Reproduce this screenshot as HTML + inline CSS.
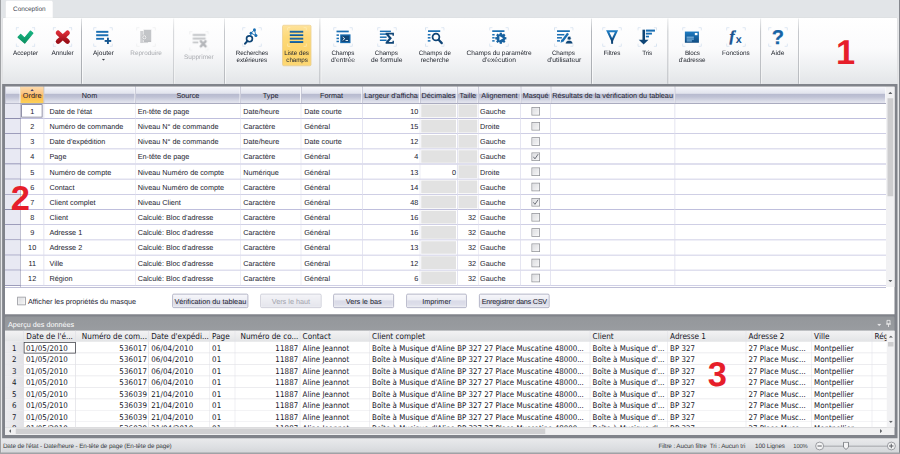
<!DOCTYPE html><html lang="fr"><head><meta charset="utf-8"><title>Conception</title><style>*{box-sizing:border-box;margin:0;padding:0}html,body{width:900px;height:454px;overflow:hidden;background:#e6e7e9}#root{position:absolute;left:0;top:0;width:3600px;height:1816px;transform:scale(0.25);transform-origin:0 0;font-family:"Liberation Sans",sans-serif;color:#1a1a2e;text-rendering:geometricPrecision}
.a{position:absolute;white-space:nowrap}
.rb{font-size:25.8px;color:#22262f;text-align:center;line-height:30px}
.rb.dis{color:#a9abb0}
.g{font-size:29.04px;color:#1c1c30;line-height:60.7px;height:60.7px}
.gh{font-size:29.04px;color:#1c1c30;text-align:center;line-height:68.8px;height:65.6px;top:347.2px;background:linear-gradient(#fbfbfd 0,#f0f1f7 10%,#e2e4ee 40%,#b7bacf 45%,#bfc2d5 62%,#dcdee9 88%,#e6e7f0 100%);border-right:3px solid #f6f6fa;border-left:2.4px solid #9fa1b9;overflow:hidden}
.pv{font-family:"DejaVu Sans Condensed","DejaVu Sans",sans-serif;font-stretch:condensed;font-size:31.4px;color:#15151f;line-height:45.88px;height:45.88px}
.st{font-size:25.4px;letter-spacing:-0.48px;color:#3a3d44;line-height:32px}
.btn{font-size:29.04px;text-align:center;height:57.2px;line-height:55.2px;top:1174.8px;border:3px solid #9c9eb6;border-radius:6px;background:linear-gradient(#f7f7fb 0,#ecedf4 45%,#d9dae7 50%,#dcdde9 75%,#e8e9f1 100%);color:#1c1c30;box-shadow:inset 0 0 0 2px rgba(255,255,255,.7)}
.btn.dis{color:#a2a3ad;border-color:#c0c1cf;background:linear-gradient(#f4f4f8,#e4e5ec)}
.cb{width:34px;height:34px;border:3px solid #8e9096;background:linear-gradient(135deg,#dcdde0,#f6f6f7);box-shadow:inset 0 0 0 2.4px rgba(255,255,255,.55)}
.big{font-weight:bold;font-size:138px;line-height:160px;color:#e61e2a}
</style></head><body><div id="root"><div class="a" style="left:0px;top:0px;width:3600px;height:1816px;background:#e6e7e9"></div>
<div class="a" style="left:0px;top:0px;width:4.2px;height:1816px;background:#a0a2a5"></div>
<div class="a" style="left:3596px;top:0px;width:4px;height:1816px;background:#85888e"></div>
<div class="a" style="left:4.2px;top:0px;width:3592px;height:70.4px;background:#e2e5e8"></div>
<div class="a" style="left:10.4px;top:69.2px;width:3580px;height:266.4px;background:linear-gradient(#ffffff 0,#fbfbfc 45%,#eceef0 80%,#e3e5e8 100%);border-left:2.8px solid #b4b7bb;border-right:2.8px solid #b4b7bb;border-top:2.8px solid #cdd0d4;border-radius:6px 6px 0 0"></div>
<div class="a rb" style="left:21.2px;top:2px;width:192px;height:68.8px;background:#fff;border:2.4px solid #d4d6d9;border-bottom:none;border-radius:6px 6px 0 0;line-height:64.8px;color:#454954;height:68.8px">Conception</div>
<div class="a" style="left:324.4px;top:74px;width:3.2px;height:261.2px;background:linear-gradient(#e4e6e8,#b4b7bc 20%,#a9acb1 100%)"></div>
<div class="a" style="left:327.6px;top:74px;width:3.2px;height:261.2px;background:rgba(255,255,255,.85)"></div>
<div class="a" style="left:694px;top:74px;width:3.2px;height:261.2px;background:linear-gradient(#e4e6e8,#b4b7bc 20%,#a9acb1 100%)"></div>
<div class="a" style="left:697.2px;top:74px;width:3.2px;height:261.2px;background:rgba(255,255,255,.85)"></div>
<div class="a" style="left:896.8px;top:74px;width:3.2px;height:261.2px;background:linear-gradient(#e4e6e8,#b4b7bc 20%,#a9acb1 100%)"></div>
<div class="a" style="left:900px;top:74px;width:3.2px;height:261.2px;background:rgba(255,255,255,.85)"></div>
<div class="a" style="left:1278.4px;top:74px;width:3.2px;height:261.2px;background:linear-gradient(#e4e6e8,#b4b7bc 20%,#a9acb1 100%)"></div>
<div class="a" style="left:1281.6px;top:74px;width:3.2px;height:261.2px;background:rgba(255,255,255,.85)"></div>
<div class="a" style="left:2364.4px;top:74px;width:3.2px;height:261.2px;background:linear-gradient(#e4e6e8,#b4b7bc 20%,#a9acb1 100%)"></div>
<div class="a" style="left:2367.6px;top:74px;width:3.2px;height:261.2px;background:rgba(255,255,255,.85)"></div>
<div class="a" style="left:2670.4px;top:74px;width:3.2px;height:261.2px;background:linear-gradient(#e4e6e8,#b4b7bc 20%,#a9acb1 100%)"></div>
<div class="a" style="left:2673.6px;top:74px;width:3.2px;height:261.2px;background:rgba(255,255,255,.85)"></div>
<div class="a" style="left:3041.4px;top:74px;width:3.2px;height:261.2px;background:linear-gradient(#e4e6e8,#b4b7bc 20%,#a9acb1 100%)"></div>
<div class="a" style="left:3044.6px;top:74px;width:3.2px;height:261.2px;background:rgba(255,255,255,.85)"></div>
<div class="a" style="left:3192.8px;top:74px;width:3.2px;height:261.2px;background:linear-gradient(#e4e6e8,#b4b7bc 20%,#a9acb1 100%)"></div>
<div class="a" style="left:3196px;top:74px;width:3.2px;height:261.2px;background:rgba(255,255,255,.85)"></div>
<svg class="a" style="left:0;top:0;width:0;height:0" viewBox="0 0 1 1"><defs><linearGradient id="gB" x1="0" y1="0" x2="0" y2="1"><stop offset="0" stop-color="#1f7dc3"/><stop offset="1" stop-color="#0f4a80"/></linearGradient><linearGradient id="gG" x1="0" y1="0" x2="0" y2="1"><stop offset="0" stop-color="#18b583"/><stop offset="1" stop-color="#0b9060"/></linearGradient><linearGradient id="gR" x1="0" y1="0" x2="0" y2="1"><stop offset="0" stop-color="#d82c36"/><stop offset="1" stop-color="#9d0f18"/></linearGradient></defs></svg>
<div class="a" style="left:1129.2px;top:100.4px;width:116px;height:163.2px;border:2.8px solid #e3b54e;border-radius:6px;background:linear-gradient(#fee29a 0,#fdd978 30%,#fcd36a 70%,#fdd874 100%)"></div>
<svg class="a" style="left:63.4px;top:109.2px;width:78px;height:78px;" viewBox="0 0 20 20"><path d="M0.4 3.2V0.4H3.2M16.8 0.4H19.6V3.2M19.6 16.8V19.6H16.8M3.2 19.6H0.4V16.8" fill="none" stroke="#cbdbec" stroke-width=".8"/><path d="M2.4 10.2L5.1 7.4L9.1 11.1L15 3.9L17.6 6L9.2 16.2Z" fill="url(#gG)" stroke="url(#gG)" stroke-width="1.2" stroke-linejoin="round"/></svg>
<div class="a rb " style="left:-78px;top:195.2px;width:360px;font-size:25.52px;letter-spacing:0px;text-indent:0px">Accepter</div>
<svg class="a" style="left:211.2px;top:109.2px;width:78px;height:78px;" viewBox="0 0 20 20"><path d="M0.4 3.2V0.4H3.2M16.8 0.4H19.6V3.2M19.6 16.8V19.6H16.8M3.2 19.6H0.4V16.8" fill="none" stroke="#cbdbec" stroke-width=".8"/><path d="M5.5 5.8L15.1 14.6M15.1 5.8L5.5 14.6" fill="none" stroke="url(#gR)" stroke-width="4.9" stroke-linecap="round"/></svg>
<div class="a rb " style="left:70.4px;top:195.2px;width:360px;font-size:25.96px;letter-spacing:0px;text-indent:0px">Annuler</div>
<svg class="a" style="left:373.2px;top:109.2px;width:78px;height:78px;" viewBox="0 0 20 20"><path d="M0.4 3.2V0.4H3.2M16.8 0.4H19.6V3.2M19.6 16.8V19.6H16.8M3.2 19.6H0.4V16.8" fill="none" stroke="#cbdbec" stroke-width=".8"/><g fill="#1a6fb3"><rect x="3" y="3.7" width="12.5" height="2"/><rect x="3" y="7.2" width="12.5" height="2"/><rect x="3" y="10.9" width="8.1" height="1.9"/></g><g fill="#14558f"><rect x="11.7" y="13.1" width="6.7" height="1.9"/><rect x="14.1" y="10.7" width="1.9" height="6.5"/></g></svg>
<div class="a rb " style="left:233.6px;top:195.2px;width:360px;font-size:26.32px;letter-spacing:0px;text-indent:0px">Ajouter</div>
<svg class="a" style="left:545.4px;top:109.2px;width:78px;height:78px;" viewBox="0 0 20 20"><path d="M0.4 3.2V0.4H3.2M16.8 0.4H19.6V3.2M19.6 16.8V19.6H16.8M3.2 19.6H0.4V16.8" fill="none" stroke="#e9eaec" stroke-width=".8"/><rect x="4.1" y="3.8" width="8" height="12.4" fill="#cfd0d3"/><rect x="7.6" y="2.5" width="7.8" height="12.6" fill="#c3c5c8" stroke="#f3f3f4" stroke-width=".6"/><rect x="7.9" y="13.8" width="7.2" height="1.1" fill="#b4b6ba"/><circle cx="8.3" cy="10.3" r="2.5" fill="#f6f6f7" stroke="#b9bbbf" stroke-width=".9"/><path d="M6.8 10.3h3M8.3 8.8v3" stroke="#b4b6ba" stroke-width=".8"/></svg>
<div class="a rb dis" style="left:404.4px;top:195.2px;width:360px;font-size:25.56px;letter-spacing:0px;text-indent:0px">Reproduire</div>
<svg class="a" style="left:757.2px;top:124.8px;width:78px;height:78px;" viewBox="0 0 20 20"><path d="M0.4 3.2V0.4H3.2M16.8 0.4H19.6V3.2M19.6 16.8V19.6H16.8M3.2 19.6H0.4V16.8" fill="none" stroke="#e9eaec" stroke-width=".8"/><g fill="#c1c3c6"><rect x="3.6" y="2.8" width="13.2" height="2"/><rect x="3.6" y="6.6" width="13.2" height="2"/><rect x="3.6" y="10.7" width="5.7" height="1.7"/></g><path d="M11.9 10.4L16.8 15.5M16.8 10.4L11.9 15.5" stroke="#b4b6ba" stroke-width="2.5" stroke-linecap="round"/></svg>
<div class="a rb dis" style="left:615.6px;top:210.8px;width:360px;font-size:25.8px;letter-spacing:0px;text-indent:0px">Supprimer</div>
<svg class="a" style="left:969px;top:109.2px;width:78px;height:78px;" viewBox="0 0 20 20"><path d="M0.4 3.2V0.4H3.2M16.8 0.4H19.6V3.2M19.6 16.8V19.6H16.8M3.2 19.6H0.4V16.8" fill="none" stroke="#cbdbec" stroke-width=".8"/><path d="M9 6.05L12.5 2.6L14 8.5Z" fill="none" stroke="#1a6fb3" stroke-width=".9"/><circle cx="7.4" cy="11.9" r="3" fill="none" stroke="#0f4576" stroke-width="1.7"/><path d="M5.2 14.2L2.9 16.8" stroke="#0f4576" stroke-width="2.2" stroke-linecap="round"/><path d="M9 6.05L8.3 9" stroke="#1a6fb3" stroke-width="1"/><circle cx="12.5" cy="2.7" r="1.55" fill="#1a6fb3"/><circle cx="14" cy="8.5" r="1.55" fill="#1a6fb3"/><circle cx="9" cy="6.05" r="1.45" fill="#1a6fb3"/></svg>
<div class="a rb " style="left:828px;top:195.2px;width:360px;font-size:25.2px;letter-spacing:-0.54px;text-indent:-0.54px">Recherches</div>
<div class="a rb " style="left:827.2px;top:225.2px;width:360px;font-size:25.2px;letter-spacing:-0.2px;text-indent:-0.2px">extérieures</div>
<svg class="a" style="left:1149.4px;top:109.2px;width:78px;height:78px;" viewBox="0 0 20 20"><path d="M0.4 3.2V0.4H3.2M16.8 0.4H19.6V3.2M19.6 16.8V19.6H16.8M3.2 19.6H0.4V16.8" fill="none" stroke="#fff0c0" stroke-width=".8"/><g fill="url(#gB)"><rect x="2.6" y="3.6" width="13.8" height="1.9"/><rect x="2.6" y="7.1" width="13.8" height="1.9"/><rect x="2.6" y="10.7" width="13.8" height="1.9"/><rect x="2.6" y="14.1" width="13.8" height="2"/></g></svg>
<div class="a rb " style="left:1006.4px;top:195.2px;width:360px;font-size:25.2px;letter-spacing:-0.18px;text-indent:-0.18px">Liste des</div>
<div class="a rb " style="left:1008.4px;top:225.2px;width:360px;font-size:25.2px;letter-spacing:-0.42px;text-indent:-0.42px">champs</div>
<svg class="a" style="left:1333px;top:109.2px;width:78px;height:78px;" viewBox="0 0 20 20"><path d="M0.4 3.2V0.4H3.2M16.8 0.4H19.6V3.2M19.6 16.8V19.6H16.8M3.2 19.6H0.4V16.8" fill="none" stroke="#cbdbec" stroke-width=".8"/><rect x="3.35" y="3.45" width="12.55" height="1.75" fill="#1a6fb3"/><rect x="3.35" y="7.3" width="2.5" height="1.55" fill="#1a6fb3"/><rect x="3.35" y="10.7" width="2.5" height="1.55" fill="#1a6fb3"/><rect x="3.35" y="13.8" width="2.5" height="1.55" fill="#1a6fb3"/><rect x="7.1" y="7.3" width="10.6" height="9" fill="#1a6fb3"/><rect x="8.3" y="8.6" width="8.2" height="6.4" fill="#0f4576"/><path d="M9.7 10l2.1 1.7-2.1 1.7M12.6 13.6h2.6" fill="none" stroke="#fff" stroke-width=".9"/></svg>
<div class="a rb " style="left:1191.6px;top:195.2px;width:360px;font-size:25.2px;letter-spacing:-0.34px;text-indent:-0.34px">Champs</div>
<div class="a rb " style="left:1192px;top:225.2px;width:360px;font-size:26.68px;letter-spacing:0px;text-indent:0px">d&#x27;entrée</div>
<svg class="a" style="left:1509px;top:109.2px;width:78px;height:78px;" viewBox="0 0 20 20"><path d="M0.4 3.2V0.4H3.2M16.8 0.4H19.6V3.2M19.6 16.8V19.6H16.8M3.2 19.6H0.4V16.8" fill="none" stroke="#cbdbec" stroke-width=".8"/><rect x="2.7" y="3.45" width="11.3" height="1.5" fill="#1a6fb3"/><rect x="2.7" y="6.3" width="6.9" height="1.5" fill="#1a6fb3"/><rect x="2.7" y="9.45" width="6.9" height="1.5" fill="#1a6fb3"/><rect x="2.7" y="12.6" width="6.9" height="1.5" fill="#1a6fb3"/><path d="M8.6 5.7h8.5v3h-1.5v-1.3h-3.9l3.3 3.9-3.3 3.9h3.9v-1.3h1.5v3.1h-8.5v-1.7l3.4-4-3.4-4z" fill="#0f4576"/></svg>
<div class="a rb " style="left:1365.2px;top:195.2px;width:360px;font-size:25.2px;letter-spacing:-0.34px;text-indent:-0.34px">Champs</div>
<div class="a rb " style="left:1367.2px;top:225.2px;width:360px;font-size:26.56px;letter-spacing:0px;text-indent:0px">de formule</div>
<svg class="a" style="left:1700.4px;top:109.2px;width:78px;height:78px;" viewBox="0 0 20 20"><path d="M0.4 3.2V0.4H3.2M16.8 0.4H19.6V3.2M19.6 16.8V19.6H16.8M3.2 19.6H0.4V16.8" fill="none" stroke="#cbdbec" stroke-width=".8"/><rect x="3.1" y="3.1" width="12.5" height="1.75" fill="#1a6fb3"/><rect x="2.85" y="6.9" width="2.75" height="1.55" fill="#1a6fb3"/><rect x="2.85" y="10.05" width="2.75" height="1.55" fill="#1a6fb3"/><rect x="2.85" y="13.2" width="2.75" height="1.55" fill="#1a6fb3"/><circle cx="11.25" cy="10.05" r="3.5" fill="#fff" stroke="#0f4576" stroke-width="1.8"/><path d="M14 12.9L17.2 16.3" stroke="#0f4576" stroke-width="2.3" stroke-linecap="round"/></svg>
<div class="a rb " style="left:1559.2px;top:195.2px;width:360px;font-size:25.2px;letter-spacing:0px;text-indent:0px">Champs de</div>
<div class="a rb " style="left:1559.6px;top:225.2px;width:360px;font-size:25.64px;letter-spacing:0px;text-indent:0px">recherche</div>
<svg class="a" style="left:1957px;top:109.2px;width:78px;height:78px;" viewBox="0 0 20 20"><path d="M0.4 3.2V0.4H3.2M16.8 0.4H19.6V3.2M19.6 16.8V19.6H16.8M3.2 19.6H0.4V16.8" fill="none" stroke="#cbdbec" stroke-width=".8"/><rect x="3.05" y="3.1" width="12.55" height="1.75" fill="#1a6fb3"/><rect x="3.05" y="6.9" width="2.45" height="1.55" fill="#1a6fb3"/><rect x="3.05" y="10.05" width="2.45" height="1.55" fill="#1a6fb3"/><rect x="3.05" y="13.2" width="2.45" height="1.55" fill="#1a6fb3"/><g transform="translate(11.85 11.3)" fill="#17619f"><circle r="4.5"/><rect x="-1.15" y="-5.7" width="2.3" height="2.4" transform="rotate(0)"/><rect x="-1.15" y="-5.7" width="2.3" height="2.4" transform="rotate(45)"/><rect x="-1.15" y="-5.7" width="2.3" height="2.4" transform="rotate(90)"/><rect x="-1.15" y="-5.7" width="2.3" height="2.4" transform="rotate(135)"/><rect x="-1.15" y="-5.7" width="2.3" height="2.4" transform="rotate(180)"/><rect x="-1.15" y="-5.7" width="2.3" height="2.4" transform="rotate(225)"/><rect x="-1.15" y="-5.7" width="2.3" height="2.4" transform="rotate(270)"/><rect x="-1.15" y="-5.7" width="2.3" height="2.4" transform="rotate(315)"/><path d="M-1.4 -2.3L2.5 0L-1.4 2.3Z" fill="#fff"/></g></svg>
<div class="a rb " style="left:1816.4px;top:195.2px;width:360px;font-size:26.2px;letter-spacing:0px;text-indent:0px">Champs du paramètre</div>
<div class="a rb " style="left:1816.4px;top:225.2px;width:360px;font-size:26.64px;letter-spacing:0px;text-indent:0px">d&#x27;exécution</div>
<svg class="a" style="left:2216px;top:109.2px;width:78px;height:78px;" viewBox="0 0 20 20"><path d="M0.4 3.2V0.4H3.2M16.8 0.4H19.6V3.2M19.6 16.8V19.6H16.8M3.2 19.6H0.4V16.8" fill="none" stroke="#cbdbec" stroke-width=".8"/><rect x="3.1" y="3.1" width="13.15" height="1.75" fill="#1a6fb3"/><rect x="3.1" y="6.9" width="7.5" height="1.55" fill="#1a6fb3"/><rect x="3.1" y="10.05" width="5" height="1.55" fill="#1a6fb3"/><rect x="3.1" y="13.2" width="3.1" height="1.55" fill="#1a6fb3"/><path d="M14.4 6.3L8.2 14.6" stroke="#1a6fb3" stroke-width="2.5"/><path d="M8.9 13.6L7.2 16.2L6.9 16L7.4 12.6z" fill="#1a6fb3"/><g fill="#0f4576"><circle cx="15.6" cy="11.2" r="1.9" stroke="#fff" stroke-width=".5"/><path d="M11.9 17c0-2.4 1.6-3.5 3.7-3.5s3.6 1.1 3.6 3.5z" stroke="#fff" stroke-width=".4"/></g></svg>
<div class="a rb " style="left:2073.6px;top:195.2px;width:360px;font-size:25.2px;letter-spacing:-0.34px;text-indent:-0.34px">Champs</div>
<div class="a rb " style="left:2076.8px;top:225.2px;width:360px;font-size:26.96px;letter-spacing:0px;text-indent:0px">d&#x27;utilisateur</div>
<svg class="a" style="left:2409px;top:109.2px;width:78px;height:78px;" viewBox="0 0 20 20"><path d="M0.4 3.2V0.4H3.2M16.8 0.4H19.6V3.2M19.6 16.8V19.6H16.8M3.2 19.6H0.4V16.8" fill="none" stroke="#cbdbec" stroke-width=".8"/><path d="M5.6 4.1H14.6L10.1 13.6Z" fill="none" stroke="url(#gB)" stroke-width="2.1" stroke-linejoin="miter"/><rect x="9.1" y="12.6" width="2" height="4.4" fill="#0f4576"/></svg>
<div class="a rb " style="left:2268px;top:195.2px;width:360px;font-size:25.2px;letter-spacing:-0.17px;text-indent:-0.17px">Filtres</div>
<svg class="a" style="left:2549.8px;top:109.2px;width:78px;height:78px;" viewBox="0 0 20 20"><path d="M0.4 3.2V0.4H3.2M16.8 0.4H19.6V3.2M19.6 16.8V19.6H16.8M3.2 19.6H0.4V16.8" fill="none" stroke="#cbdbec" stroke-width=".8"/><g fill="#0f4576"><rect x="5.1" y="2.5" width="2.6" height="11.4"/><path d="M1.3 12.9h10l-5 4.9z"/></g><g fill="#1a6fb3"><rect x="8.6" y="2.4" width="9.3" height="2.1"/><rect x="8.6" y="5.6" width="6.2" height="1.9"/><rect x="8.6" y="8.7" width="3.2" height="1.7"/></g></svg>
<div class="a rb " style="left:2408.8px;top:195.2px;width:360px;font-size:25.2px;letter-spacing:-0.32px;text-indent:-0.32px">Tris</div>
<svg class="a" style="left:2729px;top:109.2px;width:78px;height:78px;" viewBox="0 0 20 20"><path d="M0.4 3.2V0.4H3.2M16.8 0.4H19.6V3.2M19.6 16.8V19.6H16.8M3.2 19.6H0.4V16.8" fill="none" stroke="#cbdbec" stroke-width=".8"/><rect x="2.7" y="4.4" width="14.4" height="11.5" fill="url(#gB)"/><rect x="12.9" y="5.85" width="2.7" height="2.3" fill="#fff"/><g fill="#7fb6e0"><rect x="4.5" y="9.6" width="7.4" height="1.2"/><rect x="4.5" y="11.5" width="7.4" height="1.2"/><rect x="4.5" y="13.4" width="5.4" height="1.2"/></g></svg>
<div class="a rb " style="left:2589.6px;top:195.2px;width:360px;font-size:25.2px;letter-spacing:-0.55px;text-indent:-0.55px">Blocs</div>
<div class="a rb " style="left:2588.4px;top:225.2px;width:360px;font-size:25.2px;letter-spacing:-0.09px;text-indent:-0.09px">d&#x27;adresse</div>
<svg class="a" style="left:2905.4px;top:109.2px;width:78px;height:78px;" viewBox="0 0 20 20"><path d="M0.4 3.2V0.4H3.2M16.8 0.4H19.6V3.2M19.6 16.8V19.6H16.8M3.2 19.6H0.4V16.8" fill="none" stroke="#cbdbec" stroke-width=".8"/><text x="3.4" y="14" font-family="Liberation Serif,serif" font-style="italic" font-weight="bold" font-size="15.5" fill="#17528f" stroke="#17528f" stroke-width=".45">f</text><text x="9.7" y="16.2" font-family="Liberation Sans,sans-serif" font-weight="bold" font-size="11" fill="#17528f">x</text></svg>
<div class="a rb " style="left:2763.6px;top:195.2px;width:360px;font-size:25.44px;letter-spacing:0px;text-indent:0px">Fonctions</div>
<svg class="a" style="left:3073px;top:109.2px;width:78px;height:78px;" viewBox="0 0 20 20"><path d="M0.4 3.2V0.4H3.2M16.8 0.4H19.6V3.2M19.6 16.8V19.6H16.8M3.2 19.6H0.4V16.8" fill="none" stroke="#cbdbec" stroke-width=".8"/><text x="9.8" y="17.1" text-anchor="middle" font-family="Liberation Sans,sans-serif" font-weight="bold" font-size="20.5" fill="#1764a6" stroke="#1764a6" stroke-width=".3">?</text></svg>
<div class="a rb " style="left:2930.8px;top:195.2px;width:360px;font-size:26.36px;letter-spacing:0px;text-indent:0px">Aide</div>
<svg class="a" style="left:407.2px;top:235.4px;width:13.6px;height:7.6px;" viewBox="0 0 3.4 1.9"><path d="M0 0 L3.4 0 L1.7 1.9Z" fill="#3c3f46"/></svg>
<div class="a big" style="left:3326.4px;top:128.4px;width:112px;text-align:center">1</div>
<div class="a" style="left:8.4px;top:335.6px;width:3582px;height:1418.4px;background:linear-gradient(90deg,#9a9ca0 0,#80838a 4px,#80838a 100%)"></div>
<div class="a" style="left:19.6px;top:347.2px;width:3558.4px;height:909.6px;background:#fff"></div>
<div class="a gh" style="left:19.6px;width:62.4px;"></div>
<div class="a gh" style="left:82px;width:93.2px;background:linear-gradient(#fedcae 0,#fcc27a 45%,#fbb050 52%,#fdd458 100%);border-left:2px solid #e8b860;border-right:2px solid #e8c070;">Ordre</div>
<div class="a gh" style="left:175.2px;width:366.8px;">Nom</div>
<div class="a gh" style="left:542px;width:420px;">Source</div>
<div class="a gh" style="left:962px;width:242px;">Type</div>
<div class="a gh" style="left:1204px;width:245.2px;">Format</div>
<div class="a gh" style="left:1449.2px;width:230.8px;">Largeur d&#x27;afficha</div>
<div class="a gh" style="left:1680px;width:149.2px;">Décimales</div>
<div class="a gh" style="left:1829.2px;width:84.8px;">Taille</div>
<div class="a gh" style="left:1914px;width:168.8px;">Alignement</div>
<div class="a gh" style="left:2082.8px;width:120px;">Masqué</div>
<div class="a gh" style="left:2202.8px;width:496.4px;">Résultats de la vérification du tableau</div>
<div class="a gh" style="left:2699.2px;width:844.8px;"></div>
<svg class="a" style="left:121.2px;top:356.4px;width:15.2px;height:8.8px;" viewBox="0 0 3.8 2.2"><path d="M0 2.2 L1.9 0 L3.8 2.2Z" fill="#3f3f6e"/></svg>
<div class="a" style="left:19.6px;top:411.6px;width:3524px;height:3.2px;background:#8f90ab"></div>
<div class="a" style="left:19.6px;top:414.8px;width:61.6px;height:60.72px;background:#e8e9f3"></div>
<div class="a g" style="left:82px;top:415.8px;width:93.2px;text-align:center">1</div>
<div class="a g" style="left:175.2px;top:415.8px;width:366.8px;padding-left:22.8px">Date de l&#x27;état</div>
<div class="a g" style="left:542px;top:415.8px;width:420px;padding-left:8.8px">En-tête de page</div>
<div class="a g" style="left:962px;top:415.8px;width:242px;padding-left:11.2px">Date/heure</div>
<div class="a g" style="left:1204px;top:415.8px;width:245.2px;padding-left:12.8px">Date courte</div>
<div class="a g" style="left:1449.2px;top:415.8px;width:230.8px;text-align:right;padding-right:6.8px">10</div>
<div class="a" style="left:1685.2px;top:418.4px;width:139.2px;height:50.72px;background:#e2e2e2"></div>
<div class="a" style="left:1834.4px;top:418.4px;width:74.8px;height:50.72px;background:#e2e2e2"></div>
<div class="a g" style="left:1914px;top:415.8px;width:168.8px;padding-left:6.4px">Gauche</div>
<div class="a cb" style="left:2126.4px;top:427.6px"></div>
<div class="a" style="left:19.6px;top:472.32px;width:3524px;height:3.2px;background:#bfbfdd"></div>
<div class="a" style="left:19.6px;top:472.32px;width:62.4px;height:3.2px;background:#8e8eae"></div>
<div class="a" style="left:19.6px;top:475.52px;width:61.6px;height:60.72px;background:#e8e9f3"></div>
<div class="a g" style="left:82px;top:476.48px;width:93.2px;text-align:center">2</div>
<div class="a g" style="left:175.2px;top:476.48px;width:366.8px;padding-left:22.8px">Numéro de commande</div>
<div class="a g" style="left:542px;top:476.48px;width:420px;padding-left:8.8px">Niveau N° de commande</div>
<div class="a g" style="left:962px;top:476.48px;width:242px;padding-left:11.2px">Caractère</div>
<div class="a g" style="left:1204px;top:476.48px;width:245.2px;padding-left:12.8px">Général</div>
<div class="a g" style="left:1449.2px;top:476.48px;width:230.8px;text-align:right;padding-right:6.8px">15</div>
<div class="a" style="left:1685.2px;top:479.12px;width:139.2px;height:50.72px;background:#e2e2e2"></div>
<div class="a" style="left:1834.4px;top:479.12px;width:74.8px;height:50.72px;background:#e2e2e2"></div>
<div class="a g" style="left:1914px;top:476.48px;width:168.8px;padding-left:6.4px">Droite</div>
<div class="a cb" style="left:2126.4px;top:488.32px"></div>
<div class="a" style="left:19.6px;top:533px;width:3524px;height:3.2px;background:#bfbfdd"></div>
<div class="a" style="left:19.6px;top:533px;width:62.4px;height:3.2px;background:#8e8eae"></div>
<div class="a" style="left:19.6px;top:536.2px;width:61.6px;height:60.72px;background:#e8e9f3"></div>
<div class="a g" style="left:82px;top:537.2px;width:93.2px;text-align:center">3</div>
<div class="a g" style="left:175.2px;top:537.2px;width:366.8px;padding-left:22.8px">Date d&#x27;expédition</div>
<div class="a g" style="left:542px;top:537.2px;width:420px;padding-left:8.8px">Niveau N° de commande</div>
<div class="a g" style="left:962px;top:537.2px;width:242px;padding-left:11.2px">Date/heure</div>
<div class="a g" style="left:1204px;top:537.2px;width:245.2px;padding-left:12.8px">Date courte</div>
<div class="a g" style="left:1449.2px;top:537.2px;width:230.8px;text-align:right;padding-right:6.8px">12</div>
<div class="a" style="left:1685.2px;top:539.8px;width:139.2px;height:50.72px;background:#e2e2e2"></div>
<div class="a" style="left:1834.4px;top:539.8px;width:74.8px;height:50.72px;background:#e2e2e2"></div>
<div class="a g" style="left:1914px;top:537.2px;width:168.8px;padding-left:6.4px">Gauche</div>
<div class="a cb" style="left:2126.4px;top:549px"></div>
<div class="a" style="left:19.6px;top:593.72px;width:3524px;height:3.2px;background:#bfbfdd"></div>
<div class="a" style="left:19.6px;top:593.72px;width:62.4px;height:3.2px;background:#8e8eae"></div>
<div class="a" style="left:19.6px;top:596.92px;width:61.6px;height:60.72px;background:#e8e9f3"></div>
<div class="a g" style="left:82px;top:597.92px;width:93.2px;text-align:center">4</div>
<div class="a g" style="left:175.2px;top:597.92px;width:366.8px;padding-left:22.8px">Page</div>
<div class="a g" style="left:542px;top:597.92px;width:420px;padding-left:8.8px">En-tête de page</div>
<div class="a g" style="left:962px;top:597.92px;width:242px;padding-left:11.2px">Caractère</div>
<div class="a g" style="left:1204px;top:597.92px;width:245.2px;padding-left:12.8px">Général</div>
<div class="a g" style="left:1449.2px;top:597.92px;width:230.8px;text-align:right;padding-right:6.8px">4</div>
<div class="a" style="left:1685.2px;top:600.52px;width:139.2px;height:50.72px;background:#e2e2e2"></div>
<div class="a" style="left:1834.4px;top:600.52px;width:74.8px;height:50.72px;background:#e2e2e2"></div>
<div class="a g" style="left:1914px;top:597.92px;width:168.8px;padding-left:6.4px">Gauche</div>
<div class="a cb" style="left:2126.4px;top:609.72px"><svg class="a" style="left:0;top:0;width:28px;height:28px" viewBox="0 0 7 7"><path d="M1.1 3.5L2.7 5.6L5.9 .9" fill="none" stroke="#5b5e68" stroke-width=".85"/></svg></div>
<div class="a" style="left:19.6px;top:654.4px;width:3524px;height:3.2px;background:#bfbfdd"></div>
<div class="a" style="left:19.6px;top:654.4px;width:62.4px;height:3.2px;background:#8e8eae"></div>
<div class="a" style="left:19.6px;top:657.6px;width:61.6px;height:60.72px;background:#e8e9f3"></div>
<div class="a g" style="left:82px;top:658.6px;width:93.2px;text-align:center">5</div>
<div class="a g" style="left:175.2px;top:658.6px;width:366.8px;padding-left:22.8px">Numéro de compte</div>
<div class="a g" style="left:542px;top:658.6px;width:420px;padding-left:8.8px">Niveau Numéro de compte</div>
<div class="a g" style="left:962px;top:658.6px;width:242px;padding-left:11.2px">Numérique</div>
<div class="a g" style="left:1204px;top:658.6px;width:245.2px;padding-left:12.8px">Général</div>
<div class="a g" style="left:1449.2px;top:658.6px;width:230.8px;text-align:right;padding-right:6.8px">13</div>
<div class="a g" style="left:1680px;top:658.6px;width:149.2px;text-align:right;padding-right:4.8px">0</div>
<div class="a" style="left:1834.4px;top:661.2px;width:74.8px;height:50.72px;background:#e2e2e2"></div>
<div class="a g" style="left:1914px;top:658.6px;width:168.8px;padding-left:6.4px">Droite</div>
<div class="a cb" style="left:2126.4px;top:670.4px"></div>
<div class="a" style="left:19.6px;top:715.12px;width:3524px;height:3.2px;background:#bfbfdd"></div>
<div class="a" style="left:19.6px;top:715.12px;width:62.4px;height:3.2px;background:#8e8eae"></div>
<div class="a" style="left:19.6px;top:718.28px;width:61.6px;height:60.72px;background:#e8e9f3"></div>
<div class="a g" style="left:82px;top:719.28px;width:93.2px;text-align:center">6</div>
<div class="a g" style="left:175.2px;top:719.28px;width:366.8px;padding-left:22.8px">Contact</div>
<div class="a g" style="left:542px;top:719.28px;width:420px;padding-left:8.8px">Niveau Numéro de compte</div>
<div class="a g" style="left:962px;top:719.28px;width:242px;padding-left:11.2px">Caractère</div>
<div class="a g" style="left:1204px;top:719.28px;width:245.2px;padding-left:12.8px">Général</div>
<div class="a g" style="left:1449.2px;top:719.28px;width:230.8px;text-align:right;padding-right:6.8px">14</div>
<div class="a" style="left:1685.2px;top:721.88px;width:139.2px;height:50.72px;background:#e2e2e2"></div>
<div class="a" style="left:1834.4px;top:721.88px;width:74.8px;height:50.72px;background:#e2e2e2"></div>
<div class="a g" style="left:1914px;top:719.28px;width:168.8px;padding-left:6.4px">Gauche</div>
<div class="a cb" style="left:2126.4px;top:731.08px"></div>
<div class="a" style="left:19.6px;top:775.8px;width:3524px;height:3.2px;background:#bfbfdd"></div>
<div class="a" style="left:19.6px;top:775.8px;width:62.4px;height:3.2px;background:#8e8eae"></div>
<div class="a" style="left:19.6px;top:779px;width:61.6px;height:60.72px;background:#e8e9f3"></div>
<div class="a g" style="left:82px;top:780px;width:93.2px;text-align:center">7</div>
<div class="a g" style="left:175.2px;top:780px;width:366.8px;padding-left:22.8px">Client complet</div>
<div class="a g" style="left:542px;top:780px;width:420px;padding-left:8.8px">Niveau Client</div>
<div class="a g" style="left:962px;top:780px;width:242px;padding-left:11.2px">Caractère</div>
<div class="a g" style="left:1204px;top:780px;width:245.2px;padding-left:12.8px">Général</div>
<div class="a g" style="left:1449.2px;top:780px;width:230.8px;text-align:right;padding-right:6.8px">48</div>
<div class="a" style="left:1685.2px;top:782.6px;width:139.2px;height:50.72px;background:#e2e2e2"></div>
<div class="a" style="left:1834.4px;top:782.6px;width:74.8px;height:50.72px;background:#e2e2e2"></div>
<div class="a g" style="left:1914px;top:780px;width:168.8px;padding-left:6.4px">Gauche</div>
<div class="a cb" style="left:2126.4px;top:791.8px"><svg class="a" style="left:0;top:0;width:28px;height:28px" viewBox="0 0 7 7"><path d="M1.1 3.5L2.7 5.6L5.9 .9" fill="none" stroke="#5b5e68" stroke-width=".85"/></svg></div>
<div class="a" style="left:19.6px;top:836.48px;width:3524px;height:3.2px;background:#bfbfdd"></div>
<div class="a" style="left:19.6px;top:836.48px;width:62.4px;height:3.2px;background:#8e8eae"></div>
<div class="a" style="left:19.6px;top:839.72px;width:61.6px;height:60.72px;background:#e8e9f3"></div>
<div class="a g" style="left:82px;top:840.72px;width:93.2px;text-align:center">8</div>
<div class="a g" style="left:175.2px;top:840.72px;width:366.8px;padding-left:22.8px">Client</div>
<div class="a g" style="left:542px;top:840.72px;width:420px;padding-left:8.8px">Calculé: Bloc d&#x27;adresse</div>
<div class="a g" style="left:962px;top:840.72px;width:242px;padding-left:11.2px">Caractère</div>
<div class="a g" style="left:1204px;top:840.72px;width:245.2px;padding-left:12.8px">Général</div>
<div class="a g" style="left:1449.2px;top:840.72px;width:230.8px;text-align:right;padding-right:6.8px">16</div>
<div class="a" style="left:1685.2px;top:843.32px;width:139.2px;height:50.72px;background:#e2e2e2"></div>
<div class="a g" style="left:1829.2px;top:840.72px;width:84.8px;text-align:right;padding-right:10px">32</div>
<div class="a g" style="left:1914px;top:840.72px;width:168.8px;padding-left:6.4px">Gauche</div>
<div class="a cb" style="left:2126.4px;top:852.48px"></div>
<div class="a" style="left:19.6px;top:897.2px;width:3524px;height:3.2px;background:#bfbfdd"></div>
<div class="a" style="left:19.6px;top:897.2px;width:62.4px;height:3.2px;background:#8e8eae"></div>
<div class="a" style="left:19.6px;top:900.4px;width:61.6px;height:60.72px;background:#e8e9f3"></div>
<div class="a g" style="left:82px;top:901.4px;width:93.2px;text-align:center">9</div>
<div class="a g" style="left:175.2px;top:901.4px;width:366.8px;padding-left:22.8px">Adresse 1</div>
<div class="a g" style="left:542px;top:901.4px;width:420px;padding-left:8.8px">Calculé: Bloc d&#x27;adresse</div>
<div class="a g" style="left:962px;top:901.4px;width:242px;padding-left:11.2px">Caractère</div>
<div class="a g" style="left:1204px;top:901.4px;width:245.2px;padding-left:12.8px">Général</div>
<div class="a g" style="left:1449.2px;top:901.4px;width:230.8px;text-align:right;padding-right:6.8px">16</div>
<div class="a" style="left:1685.2px;top:904px;width:139.2px;height:50.72px;background:#e2e2e2"></div>
<div class="a g" style="left:1829.2px;top:901.4px;width:84.8px;text-align:right;padding-right:10px">32</div>
<div class="a g" style="left:1914px;top:901.4px;width:168.8px;padding-left:6.4px">Gauche</div>
<div class="a cb" style="left:2126.4px;top:913.2px"></div>
<div class="a" style="left:19.6px;top:957.92px;width:3524px;height:3.2px;background:#bfbfdd"></div>
<div class="a" style="left:19.6px;top:957.92px;width:62.4px;height:3.2px;background:#8e8eae"></div>
<div class="a" style="left:19.6px;top:961.12px;width:61.6px;height:60.72px;background:#e8e9f3"></div>
<div class="a g" style="left:82px;top:962.12px;width:93.2px;text-align:center">10</div>
<div class="a g" style="left:175.2px;top:962.12px;width:366.8px;padding-left:22.8px">Adresse 2</div>
<div class="a g" style="left:542px;top:962.12px;width:420px;padding-left:8.8px">Calculé: Bloc d&#x27;adresse</div>
<div class="a g" style="left:962px;top:962.12px;width:242px;padding-left:11.2px">Caractère</div>
<div class="a g" style="left:1204px;top:962.12px;width:245.2px;padding-left:12.8px">Général</div>
<div class="a g" style="left:1449.2px;top:962.12px;width:230.8px;text-align:right;padding-right:6.8px">13</div>
<div class="a" style="left:1685.2px;top:964.72px;width:139.2px;height:50.72px;background:#e2e2e2"></div>
<div class="a g" style="left:1829.2px;top:962.12px;width:84.8px;text-align:right;padding-right:10px">32</div>
<div class="a g" style="left:1914px;top:962.12px;width:168.8px;padding-left:6.4px">Gauche</div>
<div class="a cb" style="left:2126.4px;top:973.92px"></div>
<div class="a" style="left:19.6px;top:1018.6px;width:3524px;height:3.2px;background:#bfbfdd"></div>
<div class="a" style="left:19.6px;top:1018.6px;width:62.4px;height:3.2px;background:#8e8eae"></div>
<div class="a" style="left:19.6px;top:1021.8px;width:61.6px;height:60.72px;background:#e8e9f3"></div>
<div class="a g" style="left:82px;top:1022.8px;width:93.2px;text-align:center">11</div>
<div class="a g" style="left:175.2px;top:1022.8px;width:366.8px;padding-left:22.8px">Ville</div>
<div class="a g" style="left:542px;top:1022.8px;width:420px;padding-left:8.8px">Calculé: Bloc d&#x27;adresse</div>
<div class="a g" style="left:962px;top:1022.8px;width:242px;padding-left:11.2px">Caractère</div>
<div class="a g" style="left:1204px;top:1022.8px;width:245.2px;padding-left:12.8px">Général</div>
<div class="a g" style="left:1449.2px;top:1022.8px;width:230.8px;text-align:right;padding-right:6.8px">12</div>
<div class="a" style="left:1685.2px;top:1025.4px;width:139.2px;height:50.72px;background:#e2e2e2"></div>
<div class="a g" style="left:1829.2px;top:1022.8px;width:84.8px;text-align:right;padding-right:10px">32</div>
<div class="a g" style="left:1914px;top:1022.8px;width:168.8px;padding-left:6.4px">Gauche</div>
<div class="a cb" style="left:2126.4px;top:1034.6px"></div>
<div class="a" style="left:19.6px;top:1079.28px;width:3524px;height:3.2px;background:#bfbfdd"></div>
<div class="a" style="left:19.6px;top:1079.28px;width:62.4px;height:3.2px;background:#8e8eae"></div>
<div class="a" style="left:19.6px;top:1082.48px;width:61.6px;height:60.72px;background:#e8e9f3"></div>
<div class="a g" style="left:82px;top:1083.52px;width:93.2px;text-align:center">12</div>
<div class="a g" style="left:175.2px;top:1083.52px;width:366.8px;padding-left:22.8px">Région</div>
<div class="a g" style="left:542px;top:1083.52px;width:420px;padding-left:8.8px">Calculé: Bloc d&#x27;adresse</div>
<div class="a g" style="left:962px;top:1083.52px;width:242px;padding-left:11.2px">Caractère</div>
<div class="a g" style="left:1204px;top:1083.52px;width:245.2px;padding-left:12.8px">Général</div>
<div class="a g" style="left:1449.2px;top:1083.52px;width:230.8px;text-align:right;padding-right:6.8px">6</div>
<div class="a" style="left:1685.2px;top:1086.08px;width:139.2px;height:50.72px;background:#e2e2e2"></div>
<div class="a g" style="left:1829.2px;top:1083.52px;width:84.8px;text-align:right;padding-right:10px">32</div>
<div class="a g" style="left:1914px;top:1083.52px;width:168.8px;padding-left:6.4px">Gauche</div>
<div class="a cb" style="left:2126.4px;top:1095.28px"></div>
<div class="a" style="left:19.6px;top:1140px;width:3524px;height:3.2px;background:#bfbfdd"></div>
<div class="a" style="left:19.6px;top:1140px;width:62.4px;height:3.2px;background:#8e8eae"></div>
<div class="a" style="left:80.6px;top:414.8px;width:2.8px;height:734.8px;background:#8888a6"></div>
<div class="a" style="left:173.8px;top:414.8px;width:2.8px;height:726.8px;background:#dcdcec"></div>
<div class="a" style="left:540.6px;top:414.8px;width:2.8px;height:726.8px;background:#dcdcec"></div>
<div class="a" style="left:960.6px;top:414.8px;width:2.8px;height:726.8px;background:#dcdcec"></div>
<div class="a" style="left:1202.6px;top:414.8px;width:2.8px;height:726.8px;background:#dcdcec"></div>
<div class="a" style="left:1447.8px;top:414.8px;width:2.8px;height:726.8px;background:#dcdcec"></div>
<div class="a" style="left:1678.6px;top:414.8px;width:2.8px;height:726.8px;background:#dcdcec"></div>
<div class="a" style="left:1827.8px;top:414.8px;width:2.8px;height:726.8px;background:#dcdcec"></div>
<div class="a" style="left:1912.6px;top:414.8px;width:2.8px;height:726.8px;background:#dcdcec"></div>
<div class="a" style="left:2081.4px;top:414.8px;width:2.8px;height:726.8px;background:#dcdcec"></div>
<div class="a" style="left:2201.4px;top:414.8px;width:2.8px;height:726.8px;background:#dcdcec"></div>
<div class="a" style="left:2697.8px;top:414.8px;width:2.8px;height:726.8px;background:#dcdcec"></div>
<div class="a" style="left:85.2px;top:417.2px;width:84.8px;height:53.2px;border:3.2px solid #6e6e8c"></div>
<div class="a" style="left:19.6px;top:1148px;width:3524px;height:3.2px;background:#a9a9c8"></div>
<div class="a" style="left:3544px;top:347.2px;width:34px;height:801.2px;background:#f1f1f3"></div>
<div class="a" style="left:3550.4px;top:393.2px;width:22.4px;height:392px;background:#cdcdcf"></div>
<svg class="a" style="left:3552.8px;top:367.2px;width:16.8px;height:8.8px;" viewBox="0 0 4.2 2.2"><path d="M0 2.2 L2.1 0 L4.2 2.2Z" fill="#606468"/></svg>
<svg class="a" style="left:3552.8px;top:1119.6px;width:16.8px;height:8.8px;" viewBox="0 0 4.2 2.2"><path d="M0 0 L4.2 0 L2.1 2.2Z" fill="#606468"/></svg>
<div class="a cb" style="left:68.8px;top:1187.2px"></div>
<div class="a g" style="left:112px;top:1174.8px;">Afficher les propriétés du masque</div>
<div class="a btn " style="left:689.2px;width:304px">Vérification du tableau</div>
<div class="a btn dis" style="left:1041.2px;width:244.8px">Vers le haut</div>
<div class="a btn " style="left:1333.2px;width:242.8px">Vers le bas</div>
<div class="a btn " style="left:1625.2px;width:242px">Imprimer</div>
<div class="a btn " style="left:1916px;width:282px;letter-spacing:-1px">Enregistrer dans CSV</div>
<div class="a big" style="left:42.8px;top:711.2px;">2</div>
<div class="a" style="left:19.6px;top:1266.4px;width:3558.4px;height:56.8px;background:linear-gradient(#94979b,#999ca0);border-radius:4.8px 4.8px 0 0"></div>
<div class="a " style="left:32px;top:1278px;font-size:28.8px;line-height:40px;color:#fff">Aperçu des données</div>
<svg class="a" style="left:3508px;top:1294.8px;width:17.6px;height:9.6px;" viewBox="0 0 4.4 2.4"><path d="M0 0 L4.4 0 L2.2 2.4Z" fill="#e4e4e6"/></svg>
<svg class="a" style="left:3542px;top:1278.4px;width:24px;height:32px;" viewBox="0 0 6 8"><path d="M1.5 .8h3v3.6h-3zM.5 4.6h5M3 4.6v3" fill="none" stroke="#f2f2f2" stroke-width=".8"/></svg>
<div class="a" style="left:19.6px;top:1323.2px;width:3558.4px;height:386px;background:#fff;overflow:hidden"></div>
<div class="a" style="left:19.6px;top:1323.2px;width:3528px;height:43.6px;background:linear-gradient(#f3f3f4,#e3e4e6)"></div>
<div class="a pv" style="left:19.6px;top:1324px;width:75.2px;padding-left:10.4px;overflow:hidden;font-size:32.4px"></div>
<div class="a pv" style="left:94.8px;top:1324px;width:207.6px;padding-left:10.4px;overflow:hidden;font-size:32.4px">Date de l&#x27;é...</div>
<div class="a pv" style="left:302.4px;top:1324px;width:292px;text-align:right;padding-right:6.4px;overflow:hidden;font-size:32.4px">Numéro de com...</div>
<div class="a pv" style="left:594.4px;top:1324px;width:243.6px;padding-left:10.4px;overflow:hidden;font-size:32.4px">Date d&#x27;expédi...</div>
<div class="a pv" style="left:838px;top:1324px;width:102px;padding-left:10.4px;overflow:hidden;font-size:32.4px">Page</div>
<div class="a pv" style="left:940px;top:1324px;width:260px;text-align:right;padding-right:6.4px;overflow:hidden;font-size:32.4px">Numéro de co...</div>
<div class="a pv" style="left:1200px;top:1324px;width:278px;padding-left:10.4px;overflow:hidden;font-size:32.4px">Contact</div>
<div class="a pv" style="left:1478px;top:1324px;width:882px;padding-left:10.4px;overflow:hidden;font-size:32.4px">Client complet</div>
<div class="a pv" style="left:2360px;top:1324px;width:310px;padding-left:10.4px;overflow:hidden;font-size:32.4px">Client</div>
<div class="a pv" style="left:2670px;top:1324px;width:314px;padding-left:10.4px;overflow:hidden;font-size:32.4px">Adresse 1</div>
<div class="a pv" style="left:2984px;top:1324px;width:262px;padding-left:10.4px;overflow:hidden;font-size:32.4px">Adresse 2</div>
<div class="a pv" style="left:3246px;top:1324px;width:242px;padding-left:10.4px;overflow:hidden;font-size:32.4px">Ville</div>
<div class="a pv" style="left:3488px;top:1324px;width:59.2px;padding-left:10.4px;overflow:hidden;font-size:32.4px">Rég</div>
<div class="a" style="left:19.6px;top:1367.2px;width:74.4px;height:45.88px;background:linear-gradient(90deg,#ededf0,#e2e2e6)"></div>
<div class="a" style="left:19.6px;top:1410.28px;width:3528px;height:2.8px;background:#e6e6ea"></div>
<div class="a pv" style="left:19.6px;top:1371.2px;width:75.2px;height:45.88px;overflow:hidden;text-align:center">1</div>
<div class="a pv" style="left:94.8px;top:1371.2px;width:207.6px;height:45.88px;overflow:hidden;padding-left:8.8px;letter-spacing:0.56px">01/05/2010</div>
<div class="a pv" style="left:302.4px;top:1371.2px;width:292px;height:45.88px;overflow:hidden;text-align:right;padding-right:6px;letter-spacing:0.56px">536017</div>
<div class="a pv" style="left:594.4px;top:1371.2px;width:243.6px;height:45.88px;overflow:hidden;padding-left:10.4px;letter-spacing:0.56px">06/04/2010</div>
<div class="a pv" style="left:838px;top:1371.2px;width:102px;height:45.88px;overflow:hidden;padding-left:10.4px;letter-spacing:0.56px">01</div>
<div class="a pv" style="left:940px;top:1371.2px;width:260px;height:45.88px;overflow:hidden;text-align:right;padding-right:6px;letter-spacing:0.56px">11887</div>
<div class="a pv" style="left:1200px;top:1371.2px;width:278px;height:45.88px;overflow:hidden;padding-left:10.4px">Aline Jeannot</div>
<div class="a pv" style="left:1478px;top:1371.2px;width:882px;height:45.88px;overflow:hidden;padding-left:10.4px">Boîte à Musique d&#x27;Aline BP 327 27 Place Muscatine 48000...</div>
<div class="a pv" style="left:2360px;top:1371.2px;width:310px;height:45.88px;overflow:hidden;padding-left:10.4px">Boîte à Musique d&#x27;...</div>
<div class="a pv" style="left:2670px;top:1371.2px;width:314px;height:45.88px;overflow:hidden;padding-left:10.4px">BP 327</div>
<div class="a pv" style="left:2984px;top:1371.2px;width:262px;height:45.88px;overflow:hidden;padding-left:10.4px">27 Place Musc...</div>
<div class="a pv" style="left:3246px;top:1371.2px;width:242px;height:45.88px;overflow:hidden;padding-left:10.4px">Montpellier</div>
<div class="a pv" style="left:3488px;top:1371.2px;width:59.2px;height:45.88px;overflow:hidden;padding-left:10.4px"></div>
<div class="a" style="left:19.6px;top:1413.08px;width:74.4px;height:45.88px;background:linear-gradient(90deg,#ededf0,#e2e2e6)"></div>
<div class="a" style="left:19.6px;top:1456.16px;width:3528px;height:2.8px;background:#e6e6ea"></div>
<div class="a pv" style="left:19.6px;top:1417.08px;width:75.2px;height:45.88px;overflow:hidden;text-align:center">2</div>
<div class="a pv" style="left:94.8px;top:1417.08px;width:207.6px;height:45.88px;overflow:hidden;padding-left:8.8px;letter-spacing:0.56px">01/05/2010</div>
<div class="a pv" style="left:302.4px;top:1417.08px;width:292px;height:45.88px;overflow:hidden;text-align:right;padding-right:6px;letter-spacing:0.56px">536017</div>
<div class="a pv" style="left:594.4px;top:1417.08px;width:243.6px;height:45.88px;overflow:hidden;padding-left:10.4px;letter-spacing:0.56px">06/04/2010</div>
<div class="a pv" style="left:838px;top:1417.08px;width:102px;height:45.88px;overflow:hidden;padding-left:10.4px;letter-spacing:0.56px">01</div>
<div class="a pv" style="left:940px;top:1417.08px;width:260px;height:45.88px;overflow:hidden;text-align:right;padding-right:6px;letter-spacing:0.56px">11887</div>
<div class="a pv" style="left:1200px;top:1417.08px;width:278px;height:45.88px;overflow:hidden;padding-left:10.4px">Aline Jeannot</div>
<div class="a pv" style="left:1478px;top:1417.08px;width:882px;height:45.88px;overflow:hidden;padding-left:10.4px">Boîte à Musique d&#x27;Aline BP 327 27 Place Muscatine 48000...</div>
<div class="a pv" style="left:2360px;top:1417.08px;width:310px;height:45.88px;overflow:hidden;padding-left:10.4px">Boîte à Musique d&#x27;...</div>
<div class="a pv" style="left:2670px;top:1417.08px;width:314px;height:45.88px;overflow:hidden;padding-left:10.4px">BP 327</div>
<div class="a pv" style="left:2984px;top:1417.08px;width:262px;height:45.88px;overflow:hidden;padding-left:10.4px">27 Place Musc...</div>
<div class="a pv" style="left:3246px;top:1417.08px;width:242px;height:45.88px;overflow:hidden;padding-left:10.4px">Montpellier</div>
<div class="a pv" style="left:3488px;top:1417.08px;width:59.2px;height:45.88px;overflow:hidden;padding-left:10.4px"></div>
<div class="a" style="left:19.6px;top:1458.96px;width:74.4px;height:45.88px;background:linear-gradient(90deg,#ededf0,#e2e2e6)"></div>
<div class="a" style="left:19.6px;top:1502.04px;width:3528px;height:2.8px;background:#e6e6ea"></div>
<div class="a pv" style="left:19.6px;top:1462.96px;width:75.2px;height:45.88px;overflow:hidden;text-align:center">3</div>
<div class="a pv" style="left:94.8px;top:1462.96px;width:207.6px;height:45.88px;overflow:hidden;padding-left:8.8px;letter-spacing:0.56px">01/05/2010</div>
<div class="a pv" style="left:302.4px;top:1462.96px;width:292px;height:45.88px;overflow:hidden;text-align:right;padding-right:6px;letter-spacing:0.56px">536017</div>
<div class="a pv" style="left:594.4px;top:1462.96px;width:243.6px;height:45.88px;overflow:hidden;padding-left:10.4px;letter-spacing:0.56px">06/04/2010</div>
<div class="a pv" style="left:838px;top:1462.96px;width:102px;height:45.88px;overflow:hidden;padding-left:10.4px;letter-spacing:0.56px">01</div>
<div class="a pv" style="left:940px;top:1462.96px;width:260px;height:45.88px;overflow:hidden;text-align:right;padding-right:6px;letter-spacing:0.56px">11887</div>
<div class="a pv" style="left:1200px;top:1462.96px;width:278px;height:45.88px;overflow:hidden;padding-left:10.4px">Aline Jeannot</div>
<div class="a pv" style="left:1478px;top:1462.96px;width:882px;height:45.88px;overflow:hidden;padding-left:10.4px">Boîte à Musique d&#x27;Aline BP 327 27 Place Muscatine 48000...</div>
<div class="a pv" style="left:2360px;top:1462.96px;width:310px;height:45.88px;overflow:hidden;padding-left:10.4px">Boîte à Musique d&#x27;...</div>
<div class="a pv" style="left:2670px;top:1462.96px;width:314px;height:45.88px;overflow:hidden;padding-left:10.4px">BP 327</div>
<div class="a pv" style="left:2984px;top:1462.96px;width:262px;height:45.88px;overflow:hidden;padding-left:10.4px">27 Place Musc...</div>
<div class="a pv" style="left:3246px;top:1462.96px;width:242px;height:45.88px;overflow:hidden;padding-left:10.4px">Montpellier</div>
<div class="a pv" style="left:3488px;top:1462.96px;width:59.2px;height:45.88px;overflow:hidden;padding-left:10.4px"></div>
<div class="a" style="left:19.6px;top:1504.84px;width:74.4px;height:45.88px;background:linear-gradient(90deg,#ededf0,#e2e2e6)"></div>
<div class="a" style="left:19.6px;top:1547.92px;width:3528px;height:2.8px;background:#e6e6ea"></div>
<div class="a pv" style="left:19.6px;top:1508.84px;width:75.2px;height:45.88px;overflow:hidden;text-align:center">4</div>
<div class="a pv" style="left:94.8px;top:1508.84px;width:207.6px;height:45.88px;overflow:hidden;padding-left:8.8px;letter-spacing:0.56px">01/05/2010</div>
<div class="a pv" style="left:302.4px;top:1508.84px;width:292px;height:45.88px;overflow:hidden;text-align:right;padding-right:6px;letter-spacing:0.56px">536017</div>
<div class="a pv" style="left:594.4px;top:1508.84px;width:243.6px;height:45.88px;overflow:hidden;padding-left:10.4px;letter-spacing:0.56px">06/04/2010</div>
<div class="a pv" style="left:838px;top:1508.84px;width:102px;height:45.88px;overflow:hidden;padding-left:10.4px;letter-spacing:0.56px">01</div>
<div class="a pv" style="left:940px;top:1508.84px;width:260px;height:45.88px;overflow:hidden;text-align:right;padding-right:6px;letter-spacing:0.56px">11887</div>
<div class="a pv" style="left:1200px;top:1508.84px;width:278px;height:45.88px;overflow:hidden;padding-left:10.4px">Aline Jeannot</div>
<div class="a pv" style="left:1478px;top:1508.84px;width:882px;height:45.88px;overflow:hidden;padding-left:10.4px">Boîte à Musique d&#x27;Aline BP 327 27 Place Muscatine 48000...</div>
<div class="a pv" style="left:2360px;top:1508.84px;width:310px;height:45.88px;overflow:hidden;padding-left:10.4px">Boîte à Musique d&#x27;...</div>
<div class="a pv" style="left:2670px;top:1508.84px;width:314px;height:45.88px;overflow:hidden;padding-left:10.4px">BP 327</div>
<div class="a pv" style="left:2984px;top:1508.84px;width:262px;height:45.88px;overflow:hidden;padding-left:10.4px">27 Place Musc...</div>
<div class="a pv" style="left:3246px;top:1508.84px;width:242px;height:45.88px;overflow:hidden;padding-left:10.4px">Montpellier</div>
<div class="a pv" style="left:3488px;top:1508.84px;width:59.2px;height:45.88px;overflow:hidden;padding-left:10.4px"></div>
<div class="a" style="left:19.6px;top:1550.72px;width:74.4px;height:45.88px;background:linear-gradient(90deg,#ededf0,#e2e2e6)"></div>
<div class="a" style="left:19.6px;top:1593.8px;width:3528px;height:2.8px;background:#e6e6ea"></div>
<div class="a pv" style="left:19.6px;top:1554.72px;width:75.2px;height:45.88px;overflow:hidden;text-align:center">5</div>
<div class="a pv" style="left:94.8px;top:1554.72px;width:207.6px;height:45.88px;overflow:hidden;padding-left:8.8px;letter-spacing:0.56px">01/05/2010</div>
<div class="a pv" style="left:302.4px;top:1554.72px;width:292px;height:45.88px;overflow:hidden;text-align:right;padding-right:6px;letter-spacing:0.56px">536039</div>
<div class="a pv" style="left:594.4px;top:1554.72px;width:243.6px;height:45.88px;overflow:hidden;padding-left:10.4px;letter-spacing:0.56px">21/04/2010</div>
<div class="a pv" style="left:838px;top:1554.72px;width:102px;height:45.88px;overflow:hidden;padding-left:10.4px;letter-spacing:0.56px">01</div>
<div class="a pv" style="left:940px;top:1554.72px;width:260px;height:45.88px;overflow:hidden;text-align:right;padding-right:6px;letter-spacing:0.56px">11887</div>
<div class="a pv" style="left:1200px;top:1554.72px;width:278px;height:45.88px;overflow:hidden;padding-left:10.4px">Aline Jeannot</div>
<div class="a pv" style="left:1478px;top:1554.72px;width:882px;height:45.88px;overflow:hidden;padding-left:10.4px">Boîte à Musique d&#x27;Aline BP 327 27 Place Muscatine 48000...</div>
<div class="a pv" style="left:2360px;top:1554.72px;width:310px;height:45.88px;overflow:hidden;padding-left:10.4px">Boîte à Musique d&#x27;...</div>
<div class="a pv" style="left:2670px;top:1554.72px;width:314px;height:45.88px;overflow:hidden;padding-left:10.4px">BP 327</div>
<div class="a pv" style="left:2984px;top:1554.72px;width:262px;height:45.88px;overflow:hidden;padding-left:10.4px">27 Place Musc...</div>
<div class="a pv" style="left:3246px;top:1554.72px;width:242px;height:45.88px;overflow:hidden;padding-left:10.4px">Montpellier</div>
<div class="a pv" style="left:3488px;top:1554.72px;width:59.2px;height:45.88px;overflow:hidden;padding-left:10.4px"></div>
<div class="a" style="left:19.6px;top:1596.6px;width:74.4px;height:45.88px;background:linear-gradient(90deg,#ededf0,#e2e2e6)"></div>
<div class="a" style="left:19.6px;top:1639.68px;width:3528px;height:2.8px;background:#e6e6ea"></div>
<div class="a pv" style="left:19.6px;top:1600.6px;width:75.2px;height:45.88px;overflow:hidden;text-align:center">6</div>
<div class="a pv" style="left:94.8px;top:1600.6px;width:207.6px;height:45.88px;overflow:hidden;padding-left:8.8px;letter-spacing:0.56px">01/05/2010</div>
<div class="a pv" style="left:302.4px;top:1600.6px;width:292px;height:45.88px;overflow:hidden;text-align:right;padding-right:6px;letter-spacing:0.56px">536039</div>
<div class="a pv" style="left:594.4px;top:1600.6px;width:243.6px;height:45.88px;overflow:hidden;padding-left:10.4px;letter-spacing:0.56px">21/04/2010</div>
<div class="a pv" style="left:838px;top:1600.6px;width:102px;height:45.88px;overflow:hidden;padding-left:10.4px;letter-spacing:0.56px">01</div>
<div class="a pv" style="left:940px;top:1600.6px;width:260px;height:45.88px;overflow:hidden;text-align:right;padding-right:6px;letter-spacing:0.56px">11887</div>
<div class="a pv" style="left:1200px;top:1600.6px;width:278px;height:45.88px;overflow:hidden;padding-left:10.4px">Aline Jeannot</div>
<div class="a pv" style="left:1478px;top:1600.6px;width:882px;height:45.88px;overflow:hidden;padding-left:10.4px">Boîte à Musique d&#x27;Aline BP 327 27 Place Muscatine 48000...</div>
<div class="a pv" style="left:2360px;top:1600.6px;width:310px;height:45.88px;overflow:hidden;padding-left:10.4px">Boîte à Musique d&#x27;...</div>
<div class="a pv" style="left:2670px;top:1600.6px;width:314px;height:45.88px;overflow:hidden;padding-left:10.4px">BP 327</div>
<div class="a pv" style="left:2984px;top:1600.6px;width:262px;height:45.88px;overflow:hidden;padding-left:10.4px">27 Place Musc...</div>
<div class="a pv" style="left:3246px;top:1600.6px;width:242px;height:45.88px;overflow:hidden;padding-left:10.4px">Montpellier</div>
<div class="a pv" style="left:3488px;top:1600.6px;width:59.2px;height:45.88px;overflow:hidden;padding-left:10.4px"></div>
<div class="a" style="left:19.6px;top:1642.48px;width:74.4px;height:45.88px;background:linear-gradient(90deg,#ededf0,#e2e2e6)"></div>
<div class="a" style="left:19.6px;top:1685.56px;width:3528px;height:2.8px;background:#e6e6ea"></div>
<div class="a pv" style="left:19.6px;top:1646.48px;width:75.2px;height:45.88px;overflow:hidden;text-align:center">7</div>
<div class="a pv" style="left:94.8px;top:1646.48px;width:207.6px;height:45.88px;overflow:hidden;padding-left:8.8px;letter-spacing:0.56px">01/05/2010</div>
<div class="a pv" style="left:302.4px;top:1646.48px;width:292px;height:45.88px;overflow:hidden;text-align:right;padding-right:6px;letter-spacing:0.56px">536039</div>
<div class="a pv" style="left:594.4px;top:1646.48px;width:243.6px;height:45.88px;overflow:hidden;padding-left:10.4px;letter-spacing:0.56px">21/04/2010</div>
<div class="a pv" style="left:838px;top:1646.48px;width:102px;height:45.88px;overflow:hidden;padding-left:10.4px;letter-spacing:0.56px">01</div>
<div class="a pv" style="left:940px;top:1646.48px;width:260px;height:45.88px;overflow:hidden;text-align:right;padding-right:6px;letter-spacing:0.56px">11887</div>
<div class="a pv" style="left:1200px;top:1646.48px;width:278px;height:45.88px;overflow:hidden;padding-left:10.4px">Aline Jeannot</div>
<div class="a pv" style="left:1478px;top:1646.48px;width:882px;height:45.88px;overflow:hidden;padding-left:10.4px">Boîte à Musique d&#x27;Aline BP 327 27 Place Muscatine 48000...</div>
<div class="a pv" style="left:2360px;top:1646.48px;width:310px;height:45.88px;overflow:hidden;padding-left:10.4px">Boîte à Musique d&#x27;...</div>
<div class="a pv" style="left:2670px;top:1646.48px;width:314px;height:45.88px;overflow:hidden;padding-left:10.4px">BP 327</div>
<div class="a pv" style="left:2984px;top:1646.48px;width:262px;height:45.88px;overflow:hidden;padding-left:10.4px">27 Place Musc...</div>
<div class="a pv" style="left:3246px;top:1646.48px;width:242px;height:45.88px;overflow:hidden;padding-left:10.4px">Montpellier</div>
<div class="a pv" style="left:3488px;top:1646.48px;width:59.2px;height:45.88px;overflow:hidden;padding-left:10.4px"></div>
<div class="a" style="left:19.6px;top:1688.36px;width:74.4px;height:20.84px;background:linear-gradient(90deg,#ededf0,#e2e2e6)"></div>
<div class="a pv" style="left:19.6px;top:1692.36px;width:75.2px;height:16.84px;overflow:hidden;text-align:center">8</div>
<div class="a pv" style="left:94.8px;top:1692.36px;width:207.6px;height:16.84px;overflow:hidden;padding-left:8.8px;letter-spacing:0.56px">01/05/2010</div>
<div class="a pv" style="left:302.4px;top:1692.36px;width:292px;height:16.84px;overflow:hidden;text-align:right;padding-right:6px;letter-spacing:0.56px">536039</div>
<div class="a pv" style="left:594.4px;top:1692.36px;width:243.6px;height:16.84px;overflow:hidden;padding-left:10.4px;letter-spacing:0.56px">21/04/2010</div>
<div class="a pv" style="left:838px;top:1692.36px;width:102px;height:16.84px;overflow:hidden;padding-left:10.4px;letter-spacing:0.56px">01</div>
<div class="a pv" style="left:940px;top:1692.36px;width:260px;height:16.84px;overflow:hidden;text-align:right;padding-right:6px;letter-spacing:0.56px">11887</div>
<div class="a pv" style="left:1200px;top:1692.36px;width:278px;height:16.84px;overflow:hidden;padding-left:10.4px">Aline Jeannot</div>
<div class="a pv" style="left:1478px;top:1692.36px;width:882px;height:16.84px;overflow:hidden;padding-left:10.4px">Boîte à Musique d&#x27;Aline BP 327 27 Place Muscatine 48000...</div>
<div class="a pv" style="left:2360px;top:1692.36px;width:310px;height:16.84px;overflow:hidden;padding-left:10.4px">Boîte à Musique d&#x27;...</div>
<div class="a pv" style="left:2670px;top:1692.36px;width:314px;height:16.84px;overflow:hidden;padding-left:10.4px">BP 327</div>
<div class="a pv" style="left:2984px;top:1692.36px;width:262px;height:16.84px;overflow:hidden;padding-left:10.4px">27 Place Musc...</div>
<div class="a pv" style="left:3246px;top:1692.36px;width:242px;height:16.84px;overflow:hidden;padding-left:10.4px">Montpellier</div>
<div class="a pv" style="left:3488px;top:1692.36px;width:59.2px;height:16.84px;overflow:hidden;padding-left:10.4px"></div>
<div class="a" style="left:93.4px;top:1323.2px;width:2.8px;height:386px;background:#e0e0e6"></div>
<div class="a" style="left:301px;top:1323.2px;width:2.8px;height:386px;background:#e0e0e6"></div>
<div class="a" style="left:593px;top:1323.2px;width:2.8px;height:386px;background:#e0e0e6"></div>
<div class="a" style="left:836.6px;top:1323.2px;width:2.8px;height:386px;background:#e0e0e6"></div>
<div class="a" style="left:938.6px;top:1323.2px;width:2.8px;height:386px;background:#e0e0e6"></div>
<div class="a" style="left:1198.6px;top:1323.2px;width:2.8px;height:386px;background:#e0e0e6"></div>
<div class="a" style="left:1476.6px;top:1323.2px;width:2.8px;height:386px;background:#e0e0e6"></div>
<div class="a" style="left:2358.6px;top:1323.2px;width:2.8px;height:386px;background:#e0e0e6"></div>
<div class="a" style="left:2668.6px;top:1323.2px;width:2.8px;height:386px;background:#e0e0e6"></div>
<div class="a" style="left:2982.6px;top:1323.2px;width:2.8px;height:386px;background:#e0e0e6"></div>
<div class="a" style="left:3244.6px;top:1323.2px;width:2.8px;height:386px;background:#e0e0e6"></div>
<div class="a" style="left:3486.6px;top:1323.2px;width:2.8px;height:386px;background:#e0e0e6"></div>
<div class="a" style="left:94.8px;top:1367.6px;width:208px;height:46.8px;border:3.4px solid #3e3f46"></div>
<div class="a" style="left:19.6px;top:1709.2px;width:3558.4px;height:30.8px;background:#f0f0f1"></div>
<div class="a" style="left:62.8px;top:1713.6px;width:2118px;height:22px;background:#d0d0d2"></div>
<svg class="a" style="left:35.6px;top:1716.4px;width:8.8px;height:16.8px;" viewBox="0 0 2.2 4.2"><path d="M2.2 0 L0 2.1 L2.2 4.2Z" fill="#606468"/></svg>
<svg class="a" style="left:3520.4px;top:1716.4px;width:8.8px;height:16.8px;" viewBox="0 0 2.2 4.2"><path d="M0 0 L2.2 2.1 L0 4.2Z" fill="#606468"/></svg>
<div class="a" style="left:3547.2px;top:1323.2px;width:30.8px;height:386px;background:#f1f1f3"></div>
<div class="a" style="left:3552px;top:1368px;width:21.6px;height:17.6px;background:#cdcdcf"></div>
<svg class="a" style="left:3555.2px;top:1342px;width:16.8px;height:8.8px;" viewBox="0 0 4.2 2.2"><path d="M0 2.2 L2.1 0 L4.2 2.2Z" fill="#606468"/></svg>
<svg class="a" style="left:3555.2px;top:1682.8px;width:16.8px;height:8.8px;" viewBox="0 0 4.2 2.2"><path d="M0 0 L4.2 0 L2.1 2.2Z" fill="#606468"/></svg>
<div class="a big" style="left:2831.2px;top:1417.6px;">3</div>
<div class="a" style="left:5.6px;top:1754px;width:3589.6px;height:62px;background:linear-gradient(#e9eaec,#dcdee1 60%,#d2d4d7)"></div>
<div class="a" style="left:0px;top:1810.4px;width:3600px;height:5.6px;background:#a0a2a6"></div>
<div class="a st" style="left:11.6px;top:1768.8px;">Date de l&#x27;état - Date/heure - En-tête de page (En-tête de page)</div>
<div class="a st" style="left:2633.6px;top:1768.8px;white-space:pre">Filtre : Aucun filtre  Tri : Aucun tri</div>
<div class="a st" style="left:3020px;top:1768.8px;">100 Lignes</div>
<div class="a st" style="left:3173.2px;top:1769.2px;font-size:23.2px">100%</div>
<div class="a" style="left:3296px;top:1782.8px;width:252px;height:3.2px;background:#8f9296"></div>
<div class="a" style="left:3261px;top:1766.6px;width:34.8px;height:34.8px;border:3.2px solid #85888d;border-radius:50%;background:radial-gradient(#ffffff,#e6e7e9)"></div>
<div class="a" style="left:3547.8px;top:1766.6px;width:34.8px;height:34.8px;border:3.2px solid #85888d;border-radius:50%;background:radial-gradient(#ffffff,#e6e7e9)"></div>
<div class="a" style="left:3269.6px;top:1782.2px;width:17.6px;height:4px;background:#5a5d63"></div>
<div class="a" style="left:3556.4px;top:1782.2px;width:17.6px;height:4px;background:#5a5d63"></div>
<div class="a" style="left:3563.2px;top:1775.4px;width:4px;height:17.6px;background:#5a5d63"></div>
<svg class="a" style="left:3371.6px;top:1767.2px;width:24px;height:32.8px;" viewBox="0 0 6 8.2"><path d="M.5 .5h5v5L3 7.7.5 5.5z" fill="#f4f4f5" stroke="#6f7277" stroke-width=".8"/></svg></div></body></html>
